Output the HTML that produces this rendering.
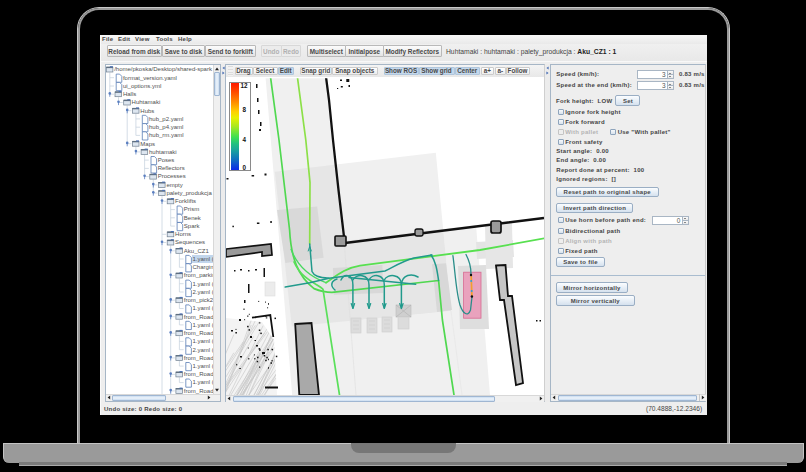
<!DOCTYPE html>
<html><head><meta charset="utf-8">
<style>
*{margin:0;padding:0;box-sizing:border-box}
html,body{width:806px;height:472px;overflow:hidden;background:#000}
body{position:relative;font-family:"Liberation Sans",sans-serif;color:#333}
.a{position:absolute}
#rim{left:77px;top:7px;width:653px;height:440px;border:1px solid #c8c8c8;border-bottom:none;border-radius:22px 22px 0 0;background:#000}
#rim2{left:78px;top:8px;width:651px;height:438px;border:2px solid #999;border-bottom:none;border-radius:21px 21px 0 0;background:#000}
#base{left:3px;top:443px;width:801px;height:19.7px;background:#9a9a9a;border:1px solid #c4c4c4;border-bottom:none;border-radius:0 0 6px 6px}
#lip{left:19px;top:462px;width:768px;height:4px;background:#7a7a7a;border-bottom:1px solid #aaa}
#notch{left:351px;top:443px;width:105px;height:10px;background:#777;border-radius:0 0 8px 8px}
#screen{left:100px;top:35px;width:607px;height:380px;background:#eeeeee}
.t{position:absolute;white-space:nowrap;font-size:6px;letter-spacing:0.25px;font-weight:bold;line-height:8px;color:#444}
.n{font-weight:normal;letter-spacing:0}
.btn{position:absolute;border:1px solid #b9b9b9;background:linear-gradient(#fcfcfc,#e4e4e4);border-radius:1px;white-space:nowrap;font-size:6.4px;font-weight:bold;text-align:center;color:#484848;overflow:hidden}
.sel{background:#c4d8ec;border-color:#b0c6dc}
.dis{color:#b0b0b0;border-color:#d8d8d8;background:#ececec}
.rb{background:linear-gradient(#fbfdff,#d5e1ee);border-color:#9aaec4;border-radius:2px;font-size:6px;letter-spacing:0.25px}
.mt{border-color:#cbcbcb;background:linear-gradient(#ffffff,#ededed)}

</style></head><body>
<div id="rim" class="a"></div>
<div id="rim2" class="a"></div>
<div id="base" class="a"></div>
<div id="lip" class="a"></div>
<div id="notch" class="a"></div>

<div id="screen" class="a"></div>
<div class="a" style="left:100px;top:35px;width:607px;height:9px;background:linear-gradient(#f8f8f8,#e9e9e9)"></div>
<div class="a" style="left:100px;top:44px;width:607px;height:17px;background:linear-gradient(#f0f0f0,#e8e8e8)"></div>
<div class="a" style="left:100px;top:61px;width:607px;height:1px;background:#f8f8f8"></div>
<div class="a" style="left:100px;top:35px;width:1px;height:380px;background:#fafafa"></div>
<div class="t" style="left:102px;top:34.9px">File</div>
<div class="t" style="left:118px;top:34.9px">Edit</div>
<div class="t" style="left:135px;top:34.9px">View</div>
<div class="t" style="left:156px;top:34.9px">Tools</div>
<div class="t" style="left:178px;top:34.9px">Help</div>
<div class="btn" style="left:106.5px;top:44.8px;width:55.5px;height:11.8px;line-height:11.2px">Reload from disk</div>
<div class="btn" style="left:162px;top:44.8px;width:43px;height:11.8px;line-height:11.2px">Save to disk</div>
<div class="btn" style="left:205px;top:44.8px;width:50.5px;height:11.8px;line-height:11.2px">Send to forklift</div>
<div class="btn dis" style="left:261px;top:44.8px;width:20.5px;height:11.8px;line-height:11.2px">Undo</div>
<div class="btn dis" style="left:281px;top:44.8px;width:20px;height:11.8px;line-height:11.2px">Redo</div>
<div class="btn" style="left:307px;top:44.8px;width:38.5px;height:11.8px;line-height:11.2px">Multiselect</div>
<div class="btn" style="left:345px;top:44.8px;width:38.5px;height:11.8px;line-height:11.2px">Initialpose</div>
<div class="btn" style="left:383px;top:44.8px;width:58.5px;height:11.8px;line-height:11.2px">Modify Reflectors</div>
<div class="t n" style="left:446px;top:47.8px;font-size:6.75px;color:#444">Huhtamaki : huhtamaki : palety_produkcja : <b style="color:#222">Aku_CZ1 : 1</b></div>
<!-- panels -->
<div class="a" style="left:105px;top:64px;width:116px;height:338px;border:1px solid #a6b6c6;background:#fff"></div>
<div class="a" style="left:225px;top:64px;width:320px;height:338px;border:1px solid #a6b6c6;border-right-color:#cfcfcf;background:#fff"></div>
<div class="a" style="left:550px;top:64px;width:156px;height:338px;border:1px solid #a6b6c6;border-right-color:#c8c8c8;background:#eeeeee"></div>
<div class="t" style="left:104px;top:405px">Undo size: 0 Redo size: 0</div>
<div class="t n" style="left:646px;top:405px;width:55px;text-align:right;font-size:6.6px">(70.4888,-12.2346)</div>

<div class="a" style="left:106px;top:65px;width:107px;height:329px;overflow:hidden"><svg class="a" style="left:-106px;top:-65px" width="806" height="472"><line x1="109.8" y1="72.5" x2="109.8" y2="94.2" stroke="#c9d4e0" stroke-width="0.8"/><line x1="109.8" y1="77.7" x2="114.0" y2="77.7" stroke="#c9d4e0" stroke-width="0.8"/><line x1="109.8" y1="86.0" x2="114.0" y2="86.0" stroke="#c9d4e0" stroke-width="0.8"/><line x1="118.5" y1="97.2" x2="118.5" y2="102.5" stroke="#c9d4e0" stroke-width="0.8"/><line x1="109.8" y1="94.2" x2="114.0" y2="94.2" stroke="#c9d4e0" stroke-width="0.8"/><line x1="127.2" y1="105.5" x2="127.2" y2="143.7" stroke="#c9d4e0" stroke-width="0.8"/><line x1="118.5" y1="102.5" x2="122.7" y2="102.5" stroke="#c9d4e0" stroke-width="0.8"/><line x1="135.9" y1="113.7" x2="135.9" y2="135.4" stroke="#c9d4e0" stroke-width="0.8"/><line x1="127.2" y1="110.7" x2="131.4" y2="110.7" stroke="#c9d4e0" stroke-width="0.8"/><line x1="135.9" y1="118.9" x2="140.1" y2="118.9" stroke="#c9d4e0" stroke-width="0.8"/><line x1="135.9" y1="127.2" x2="140.1" y2="127.2" stroke="#c9d4e0" stroke-width="0.8"/><line x1="135.9" y1="135.4" x2="140.1" y2="135.4" stroke="#c9d4e0" stroke-width="0.8"/><line x1="135.9" y1="146.7" x2="135.9" y2="151.9" stroke="#c9d4e0" stroke-width="0.8"/><line x1="127.2" y1="143.7" x2="131.4" y2="143.7" stroke="#c9d4e0" stroke-width="0.8"/><line x1="144.6" y1="154.9" x2="144.6" y2="176.6" stroke="#c9d4e0" stroke-width="0.8"/><line x1="135.9" y1="151.9" x2="140.1" y2="151.9" stroke="#c9d4e0" stroke-width="0.8"/><line x1="144.6" y1="160.1" x2="148.8" y2="160.1" stroke="#c9d4e0" stroke-width="0.8"/><line x1="144.6" y1="168.4" x2="148.8" y2="168.4" stroke="#c9d4e0" stroke-width="0.8"/><line x1="153.3" y1="179.6" x2="153.3" y2="193.1" stroke="#c9d4e0" stroke-width="0.8"/><line x1="144.6" y1="176.6" x2="148.8" y2="176.6" stroke="#c9d4e0" stroke-width="0.8"/><line x1="153.3" y1="184.9" x2="157.5" y2="184.9" stroke="#c9d4e0" stroke-width="0.8"/><line x1="162.0" y1="196.1" x2="162.0" y2="440.3" stroke="#c9d4e0" stroke-width="0.8"/><line x1="153.3" y1="193.1" x2="157.5" y2="193.1" stroke="#c9d4e0" stroke-width="0.8"/><line x1="170.7" y1="204.3" x2="170.7" y2="226.1" stroke="#c9d4e0" stroke-width="0.8"/><line x1="162.0" y1="201.3" x2="166.2" y2="201.3" stroke="#c9d4e0" stroke-width="0.8"/><line x1="170.7" y1="209.6" x2="174.9" y2="209.6" stroke="#c9d4e0" stroke-width="0.8"/><line x1="170.7" y1="217.8" x2="174.9" y2="217.8" stroke="#c9d4e0" stroke-width="0.8"/><line x1="170.7" y1="226.1" x2="174.9" y2="226.1" stroke="#c9d4e0" stroke-width="0.8"/><line x1="162.0" y1="234.3" x2="166.2" y2="234.3" stroke="#c9d4e0" stroke-width="0.8"/><line x1="170.7" y1="245.5" x2="170.7" y2="440.3" stroke="#c9d4e0" stroke-width="0.8"/><line x1="162.0" y1="242.5" x2="166.2" y2="242.5" stroke="#c9d4e0" stroke-width="0.8"/><line x1="179.4" y1="253.8" x2="179.4" y2="267.3" stroke="#c9d4e0" stroke-width="0.8"/><line x1="170.7" y1="250.8" x2="174.9" y2="250.8" stroke="#c9d4e0" stroke-width="0.8"/><line x1="179.4" y1="259.0" x2="183.6" y2="259.0" stroke="#c9d4e0" stroke-width="0.8"/><line x1="179.4" y1="267.3" x2="183.6" y2="267.3" stroke="#c9d4e0" stroke-width="0.8"/><line x1="179.4" y1="278.5" x2="179.4" y2="292.0" stroke="#c9d4e0" stroke-width="0.8"/><line x1="170.7" y1="275.5" x2="174.9" y2="275.5" stroke="#c9d4e0" stroke-width="0.8"/><line x1="179.4" y1="283.7" x2="183.6" y2="283.7" stroke="#c9d4e0" stroke-width="0.8"/><line x1="179.4" y1="292.0" x2="183.6" y2="292.0" stroke="#c9d4e0" stroke-width="0.8"/><line x1="179.4" y1="303.2" x2="179.4" y2="308.5" stroke="#c9d4e0" stroke-width="0.8"/><line x1="170.7" y1="300.2" x2="174.9" y2="300.2" stroke="#c9d4e0" stroke-width="0.8"/><line x1="179.4" y1="308.5" x2="183.6" y2="308.5" stroke="#c9d4e0" stroke-width="0.8"/><line x1="179.4" y1="319.7" x2="179.4" y2="324.9" stroke="#c9d4e0" stroke-width="0.8"/><line x1="170.7" y1="316.7" x2="174.9" y2="316.7" stroke="#c9d4e0" stroke-width="0.8"/><line x1="179.4" y1="324.9" x2="183.6" y2="324.9" stroke="#c9d4e0" stroke-width="0.8"/><line x1="179.4" y1="336.2" x2="179.4" y2="349.7" stroke="#c9d4e0" stroke-width="0.8"/><line x1="170.7" y1="333.2" x2="174.9" y2="333.2" stroke="#c9d4e0" stroke-width="0.8"/><line x1="179.4" y1="341.4" x2="183.6" y2="341.4" stroke="#c9d4e0" stroke-width="0.8"/><line x1="179.4" y1="349.7" x2="183.6" y2="349.7" stroke="#c9d4e0" stroke-width="0.8"/><line x1="179.4" y1="360.9" x2="179.4" y2="366.1" stroke="#c9d4e0" stroke-width="0.8"/><line x1="170.7" y1="357.9" x2="174.9" y2="357.9" stroke="#c9d4e0" stroke-width="0.8"/><line x1="179.4" y1="366.1" x2="183.6" y2="366.1" stroke="#c9d4e0" stroke-width="0.8"/><line x1="179.4" y1="377.4" x2="179.4" y2="382.6" stroke="#c9d4e0" stroke-width="0.8"/><line x1="170.7" y1="374.4" x2="174.9" y2="374.4" stroke="#c9d4e0" stroke-width="0.8"/><line x1="179.4" y1="382.6" x2="183.6" y2="382.6" stroke="#c9d4e0" stroke-width="0.8"/><line x1="170.7" y1="390.9" x2="174.9" y2="390.9" stroke="#c9d4e0" stroke-width="0.8"/><rect x="106.3" y="67.2" width="6.6" height="4.8" fill="#dde6f0" stroke="#6f7f90" stroke-width="0.7"/><rect x="106.3" y="66.7" width="6.6" height="1.4" fill="#5f6f80"/><rect x="109.9" y="66.2" width="3" height="1" fill="#4a70b8"/><path d="M116.2 74.1 h3.4 l2.2 2.2 v6 h-5.6 z" fill="#fff" stroke="#5a7db5" stroke-width="0.8"/><path d="M116.2 82.4 h3.4 l2.2 2.2 v6 h-5.6 z" fill="#fff" stroke="#5a7db5" stroke-width="0.8"/><rect x="115.0" y="91.9" width="6.6" height="4.8" fill="#dde6f0" stroke="#6f7f90" stroke-width="0.7"/><rect x="115.0" y="91.4" width="6.6" height="1.4" fill="#5f6f80"/><rect x="118.6" y="90.9" width="3" height="1" fill="#4a70b8"/><circle cx="109.8" cy="93.4" r="1.3" fill="#5b7fc0"/><line x1="109.8" y1="93.4" x2="109.8" y2="96.8" stroke="#5b7fc0" stroke-width="0.8"/><rect x="123.7" y="100.2" width="6.6" height="4.8" fill="#dde6f0" stroke="#6f7f90" stroke-width="0.7"/><rect x="123.7" y="99.7" width="6.6" height="1.4" fill="#5f6f80"/><rect x="127.3" y="99.2" width="3" height="1" fill="#4a70b8"/><circle cx="118.5" cy="101.7" r="1.3" fill="#5b7fc0"/><line x1="118.5" y1="101.7" x2="118.5" y2="105.1" stroke="#5b7fc0" stroke-width="0.8"/><rect x="132.4" y="108.4" width="6.6" height="4.8" fill="#dde6f0" stroke="#6f7f90" stroke-width="0.7"/><rect x="132.4" y="107.9" width="6.6" height="1.4" fill="#5f6f80"/><rect x="136.0" y="107.4" width="3" height="1" fill="#4a70b8"/><circle cx="127.2" cy="109.9" r="1.3" fill="#5b7fc0"/><line x1="127.2" y1="109.9" x2="127.2" y2="113.3" stroke="#5b7fc0" stroke-width="0.8"/><path d="M142.3 115.3 h3.4 l2.2 2.2 v6 h-5.6 z" fill="#fff" stroke="#5a7db5" stroke-width="0.8"/><path d="M142.3 123.6 h3.4 l2.2 2.2 v6 h-5.6 z" fill="#fff" stroke="#5a7db5" stroke-width="0.8"/><path d="M142.3 131.8 h3.4 l2.2 2.2 v6 h-5.6 z" fill="#fff" stroke="#5a7db5" stroke-width="0.8"/><rect x="132.4" y="141.4" width="6.6" height="4.8" fill="#dde6f0" stroke="#6f7f90" stroke-width="0.7"/><rect x="132.4" y="140.9" width="6.6" height="1.4" fill="#5f6f80"/><rect x="136.0" y="140.4" width="3" height="1" fill="#4a70b8"/><circle cx="127.2" cy="142.9" r="1.3" fill="#5b7fc0"/><line x1="127.2" y1="142.9" x2="127.2" y2="146.3" stroke="#5b7fc0" stroke-width="0.8"/><rect x="141.1" y="149.6" width="6.6" height="4.8" fill="#dde6f0" stroke="#6f7f90" stroke-width="0.7"/><rect x="141.1" y="149.1" width="6.6" height="1.4" fill="#5f6f80"/><rect x="144.7" y="148.6" width="3" height="1" fill="#4a70b8"/><circle cx="135.9" cy="151.1" r="1.3" fill="#5b7fc0"/><line x1="135.9" y1="151.1" x2="135.9" y2="154.5" stroke="#5b7fc0" stroke-width="0.8"/><path d="M151.0 156.5 h3.4 l2.2 2.2 v6 h-5.6 z" fill="#fff" stroke="#5a7db5" stroke-width="0.8"/><path d="M151.0 164.8 h3.4 l2.2 2.2 v6 h-5.6 z" fill="#fff" stroke="#5a7db5" stroke-width="0.8"/><rect x="149.8" y="174.3" width="6.6" height="4.8" fill="#dde6f0" stroke="#6f7f90" stroke-width="0.7"/><rect x="149.8" y="173.8" width="6.6" height="1.4" fill="#5f6f80"/><rect x="153.4" y="173.3" width="3" height="1" fill="#4a70b8"/><circle cx="144.6" cy="175.8" r="1.3" fill="#5b7fc0"/><line x1="144.6" y1="175.8" x2="144.6" y2="179.2" stroke="#5b7fc0" stroke-width="0.8"/><rect x="158.5" y="182.6" width="6.6" height="4.8" fill="#dde6f0" stroke="#6f7f90" stroke-width="0.7"/><rect x="158.5" y="182.1" width="6.6" height="1.4" fill="#5f6f80"/><rect x="162.1" y="181.6" width="3" height="1" fill="#4a70b8"/><circle cx="153.3" cy="184.1" r="1.3" fill="#5b7fc0"/><line x1="153.3" y1="184.1" x2="153.3" y2="187.5" stroke="#5b7fc0" stroke-width="0.8"/><rect x="158.5" y="190.8" width="6.6" height="4.8" fill="#dde6f0" stroke="#6f7f90" stroke-width="0.7"/><rect x="158.5" y="190.3" width="6.6" height="1.4" fill="#5f6f80"/><rect x="162.1" y="189.8" width="3" height="1" fill="#4a70b8"/><circle cx="153.3" cy="192.3" r="1.3" fill="#5b7fc0"/><line x1="153.3" y1="192.3" x2="153.3" y2="195.7" stroke="#5b7fc0" stroke-width="0.8"/><rect x="167.2" y="199.0" width="6.6" height="4.8" fill="#dde6f0" stroke="#6f7f90" stroke-width="0.7"/><rect x="167.2" y="198.5" width="6.6" height="1.4" fill="#5f6f80"/><rect x="170.8" y="198.0" width="3" height="1" fill="#4a70b8"/><circle cx="162.0" cy="200.5" r="1.3" fill="#5b7fc0"/><line x1="162.0" y1="200.5" x2="162.0" y2="203.9" stroke="#5b7fc0" stroke-width="0.8"/><path d="M177.1 206.0 h3.4 l2.2 2.2 v6 h-5.6 z" fill="#fff" stroke="#5a7db5" stroke-width="0.8"/><path d="M177.1 214.2 h3.4 l2.2 2.2 v6 h-5.6 z" fill="#fff" stroke="#5a7db5" stroke-width="0.8"/><path d="M177.1 222.5 h3.4 l2.2 2.2 v6 h-5.6 z" fill="#fff" stroke="#5a7db5" stroke-width="0.8"/><rect x="167.2" y="232.0" width="6.6" height="4.8" fill="#dde6f0" stroke="#6f7f90" stroke-width="0.7"/><rect x="167.2" y="231.5" width="6.6" height="1.4" fill="#5f6f80"/><rect x="170.8" y="231.0" width="3" height="1" fill="#4a70b8"/><rect x="167.2" y="240.2" width="6.6" height="4.8" fill="#dde6f0" stroke="#6f7f90" stroke-width="0.7"/><rect x="167.2" y="239.7" width="6.6" height="1.4" fill="#5f6f80"/><rect x="170.8" y="239.2" width="3" height="1" fill="#4a70b8"/><circle cx="162.0" cy="241.7" r="1.3" fill="#5b7fc0"/><line x1="162.0" y1="241.7" x2="162.0" y2="245.1" stroke="#5b7fc0" stroke-width="0.8"/><rect x="175.9" y="248.5" width="6.6" height="4.8" fill="#dde6f0" stroke="#6f7f90" stroke-width="0.7"/><rect x="175.9" y="248.0" width="6.6" height="1.4" fill="#5f6f80"/><rect x="179.5" y="247.5" width="3" height="1" fill="#4a70b8"/><circle cx="170.7" cy="250.0" r="1.3" fill="#5b7fc0"/><line x1="170.7" y1="250.0" x2="170.7" y2="253.4" stroke="#5b7fc0" stroke-width="0.8"/><path d="M185.8 255.4 h3.4 l2.2 2.2 v6 h-5.6 z" fill="#fff" stroke="#5a7db5" stroke-width="0.8"/><path d="M185.8 263.7 h3.4 l2.2 2.2 v6 h-5.6 z" fill="#fff" stroke="#5a7db5" stroke-width="0.8"/><rect x="175.9" y="273.2" width="6.6" height="4.8" fill="#dde6f0" stroke="#6f7f90" stroke-width="0.7"/><rect x="175.9" y="272.7" width="6.6" height="1.4" fill="#5f6f80"/><rect x="179.5" y="272.2" width="3" height="1" fill="#4a70b8"/><circle cx="170.7" cy="274.7" r="1.3" fill="#5b7fc0"/><line x1="170.7" y1="274.7" x2="170.7" y2="278.1" stroke="#5b7fc0" stroke-width="0.8"/><path d="M185.8 280.1 h3.4 l2.2 2.2 v6 h-5.6 z" fill="#fff" stroke="#5a7db5" stroke-width="0.8"/><path d="M185.8 288.4 h3.4 l2.2 2.2 v6 h-5.6 z" fill="#fff" stroke="#5a7db5" stroke-width="0.8"/><rect x="175.9" y="297.9" width="6.6" height="4.8" fill="#dde6f0" stroke="#6f7f90" stroke-width="0.7"/><rect x="175.9" y="297.4" width="6.6" height="1.4" fill="#5f6f80"/><rect x="179.5" y="296.9" width="3" height="1" fill="#4a70b8"/><circle cx="170.7" cy="299.4" r="1.3" fill="#5b7fc0"/><line x1="170.7" y1="299.4" x2="170.7" y2="302.8" stroke="#5b7fc0" stroke-width="0.8"/><path d="M185.8 304.9 h3.4 l2.2 2.2 v6 h-5.6 z" fill="#fff" stroke="#5a7db5" stroke-width="0.8"/><rect x="175.9" y="314.4" width="6.6" height="4.8" fill="#dde6f0" stroke="#6f7f90" stroke-width="0.7"/><rect x="175.9" y="313.9" width="6.6" height="1.4" fill="#5f6f80"/><rect x="179.5" y="313.4" width="3" height="1" fill="#4a70b8"/><circle cx="170.7" cy="315.9" r="1.3" fill="#5b7fc0"/><line x1="170.7" y1="315.9" x2="170.7" y2="319.3" stroke="#5b7fc0" stroke-width="0.8"/><path d="M185.8 321.3 h3.4 l2.2 2.2 v6 h-5.6 z" fill="#fff" stroke="#5a7db5" stroke-width="0.8"/><rect x="175.9" y="330.9" width="6.6" height="4.8" fill="#dde6f0" stroke="#6f7f90" stroke-width="0.7"/><rect x="175.9" y="330.4" width="6.6" height="1.4" fill="#5f6f80"/><rect x="179.5" y="329.9" width="3" height="1" fill="#4a70b8"/><circle cx="170.7" cy="332.4" r="1.3" fill="#5b7fc0"/><line x1="170.7" y1="332.4" x2="170.7" y2="335.8" stroke="#5b7fc0" stroke-width="0.8"/><path d="M185.8 337.8 h3.4 l2.2 2.2 v6 h-5.6 z" fill="#fff" stroke="#5a7db5" stroke-width="0.8"/><path d="M185.8 346.1 h3.4 l2.2 2.2 v6 h-5.6 z" fill="#fff" stroke="#5a7db5" stroke-width="0.8"/><rect x="175.9" y="355.6" width="6.6" height="4.8" fill="#dde6f0" stroke="#6f7f90" stroke-width="0.7"/><rect x="175.9" y="355.1" width="6.6" height="1.4" fill="#5f6f80"/><rect x="179.5" y="354.6" width="3" height="1" fill="#4a70b8"/><circle cx="170.7" cy="357.1" r="1.3" fill="#5b7fc0"/><line x1="170.7" y1="357.1" x2="170.7" y2="360.5" stroke="#5b7fc0" stroke-width="0.8"/><path d="M185.8 362.5 h3.4 l2.2 2.2 v6 h-5.6 z" fill="#fff" stroke="#5a7db5" stroke-width="0.8"/><rect x="175.9" y="372.1" width="6.6" height="4.8" fill="#dde6f0" stroke="#6f7f90" stroke-width="0.7"/><rect x="175.9" y="371.6" width="6.6" height="1.4" fill="#5f6f80"/><rect x="179.5" y="371.1" width="3" height="1" fill="#4a70b8"/><circle cx="170.7" cy="373.6" r="1.3" fill="#5b7fc0"/><line x1="170.7" y1="373.6" x2="170.7" y2="377.0" stroke="#5b7fc0" stroke-width="0.8"/><path d="M185.8 379.0 h3.4 l2.2 2.2 v6 h-5.6 z" fill="#fff" stroke="#5a7db5" stroke-width="0.8"/><rect x="175.9" y="388.6" width="6.6" height="4.8" fill="#dde6f0" stroke="#6f7f90" stroke-width="0.7"/><rect x="175.9" y="388.1" width="6.6" height="1.4" fill="#5f6f80"/><rect x="179.5" y="387.6" width="3" height="1" fill="#4a70b8"/><circle cx="170.7" cy="390.1" r="1.3" fill="#5b7fc0"/><line x1="170.7" y1="390.1" x2="170.7" y2="393.5" stroke="#5b7fc0" stroke-width="0.8"/></svg><div class="a" style="left:-106px;top:-65px;width:806px;height:472px"><div class="t n" style="left:114.2px;top:65.3px;font-size:6px;color:#505050">/home/pkoska/Desktop/shared-spark</div><div class="t n" style="left:122.9px;top:73.5px;font-size:6px;color:#505050">format_version.yaml</div><div class="t n" style="left:122.9px;top:81.8px;font-size:6px;color:#505050">ui_options.yml</div><div class="t n" style="left:122.9px;top:90.0px;font-size:6px;color:#505050">Halls</div><div class="t n" style="left:131.6px;top:98.3px;font-size:6px;color:#505050">Huhtamaki</div><div class="t n" style="left:140.3px;top:106.5px;font-size:6px;color:#505050">Hubs</div><div class="t n" style="left:149.0px;top:114.7px;font-size:6px;color:#505050">hub_p2.yaml</div><div class="t n" style="left:149.0px;top:123.0px;font-size:6px;color:#505050">hub_p4.yaml</div><div class="t n" style="left:149.0px;top:131.2px;font-size:6px;color:#505050">hub_rm.yaml</div><div class="t n" style="left:140.3px;top:139.5px;font-size:6px;color:#505050">Maps</div><div class="t n" style="left:149.0px;top:147.7px;font-size:6px;color:#505050">huhtamaki</div><div class="t n" style="left:157.7px;top:155.9px;font-size:6px;color:#505050">Poses</div><div class="t n" style="left:157.7px;top:164.2px;font-size:6px;color:#505050">Reflectors</div><div class="t n" style="left:157.7px;top:172.4px;font-size:6px;color:#505050">Processes</div><div class="t n" style="left:166.4px;top:180.7px;font-size:6px;color:#505050">empty</div><div class="t n" style="left:166.4px;top:188.9px;font-size:6px;color:#505050">palety_produkcja</div><div class="t n" style="left:175.1px;top:197.1px;font-size:6px;color:#505050">Forklifts</div><div class="t n" style="left:183.8px;top:205.4px;font-size:6px;color:#505050">Prism</div><div class="t n" style="left:183.8px;top:213.6px;font-size:6px;color:#505050">Benek</div><div class="t n" style="left:183.8px;top:221.9px;font-size:6px;color:#505050">Spark</div><div class="t n" style="left:175.1px;top:230.1px;font-size:6px;color:#505050">Horns</div><div class="t n" style="left:175.1px;top:238.3px;font-size:6px;color:#505050">Sequences</div><div class="t n" style="left:183.8px;top:246.6px;font-size:6px;color:#505050">Aku_CZ1</div><div class="a" style="left:191.5px;top:255.0px;width:22px;height:8px;background:#c2d6ec"></div><div class="t n" style="left:192.5px;top:254.8px;font-size:6px;color:#505050">1.yaml (</div><div class="t n" style="left:192.5px;top:263.1px;font-size:6px;color:#505050">Charging</div><div class="t n" style="left:183.8px;top:271.3px;font-size:6px;color:#505050">from_parking</div><div class="t n" style="left:192.5px;top:279.5px;font-size:6px;color:#505050">1.yaml (</div><div class="t n" style="left:192.5px;top:287.8px;font-size:6px;color:#505050">2.yaml (</div><div class="t n" style="left:183.8px;top:296.0px;font-size:6px;color:#505050">from_pick2</div><div class="t n" style="left:192.5px;top:304.3px;font-size:6px;color:#505050">1.yaml (</div><div class="t n" style="left:183.8px;top:312.5px;font-size:6px;color:#505050">from_Road</div><div class="t n" style="left:192.5px;top:320.7px;font-size:6px;color:#505050">1.yaml (</div><div class="t n" style="left:183.8px;top:329.0px;font-size:6px;color:#505050">from_Road</div><div class="t n" style="left:192.5px;top:337.2px;font-size:6px;color:#505050">1.yaml (</div><div class="t n" style="left:192.5px;top:345.5px;font-size:6px;color:#505050">2.yaml (</div><div class="t n" style="left:183.8px;top:353.7px;font-size:6px;color:#505050">from_Road</div><div class="t n" style="left:192.5px;top:361.9px;font-size:6px;color:#505050">1.yaml (</div><div class="t n" style="left:183.8px;top:370.2px;font-size:6px;color:#505050">from_Road</div><div class="t n" style="left:192.5px;top:378.4px;font-size:6px;color:#505050">1.yaml (</div><div class="t n" style="left:183.8px;top:386.7px;font-size:6px;color:#505050">from_Road</div></div></div>
<div class="a" style="left:213px;top:65px;width:7px;height:329px;background:#f0f0f0;border-left:1px solid #d8d8d8"></div>
<div class="a" style="left:213.5px;top:72px;width:6.5px;height:24px;background:linear-gradient(90deg,#c9dcf0,#eef4fb 50%,#c9dcf0);border:1px solid #9fb6d2;border-radius:1px"></div>
<div class="a" style="left:214px;top:66px;width:6px;height:6px;font-size:5px;line-height:6px;text-align:center;color:#222"><svg width="6" height="6" viewBox="0 0 6 6" style="display:block"><path d="M1,4.2 L3,1.6 L5,4.2Z" fill="#222"/></svg></div>
<div class="a" style="left:214px;top:387px;width:6px;height:6px;font-size:5px;line-height:6px;text-align:center;color:#222"><svg width="6" height="6" viewBox="0 0 6 6" style="display:block"><path d="M1,1.8 L3,4.4 L5,1.8Z" fill="#222"/></svg></div>
<div class="a" style="left:106px;top:394px;width:114px;height:7px;background:#f0f0f0;border-top:1px solid #d8d8d8"></div>
<div class="a" style="left:112px;top:394.5px;width:54px;height:6.5px;background:linear-gradient(#c9dcf0,#eef4fb 50%,#c9dcf0);border:1px solid #9fb6d2;border-radius:1px"></div>
<div class="a" style="left:106px;top:394px;width:6px;height:7px;font-size:5px;line-height:7px;text-align:center;color:#222"><svg width="6" height="7" viewBox="0 0 6 7" style="display:block"><path d="M4.2,1.5 L1.6,3.5 L4.2,5.5Z" fill="#222"/></svg></div>
<div class="a" style="left:206px;top:394px;width:6px;height:7px;font-size:5px;line-height:7px;text-align:center;color:#222"><svg width="6" height="7" viewBox="0 0 6 7" style="display:block"><path d="M1.8,1.5 L4.4,3.5 L1.8,5.5Z" fill="#222"/></svg></div>

<svg class="a" style="left:0;top:0" width="806" height="472" viewBox="0 0 806 472">
<defs><clipPath id="mc"><rect x="226" y="78.3" width="318" height="316.7"/></clipPath></defs>
<g clip-path="url(#mc)">
<rect x="226" y="77" width="320" height="318" fill="#fff"/>
<polygon points="265.5,77 327.3,77 345,241 344,246 356,395 292.2,395" fill="#f0f0f0"/>
<polygon points="274.8,171.8 435.8,152.7 451,311 291.8,326.4" fill="#f0f0f0"/>
<polygon points="443,229 476,225 490,395 292,395 291.8,326.4 451,311" fill="#f0f0f0"/>
<polygon points="274.8,171.8 336.7,164.5 345,241 443.1,228.7 451,311 291.8,326.4" fill="#e6e6e6"/>
<line x1="344.5" y1="246" x2="356" y2="395" stroke="#dedede" stroke-width="0.6"/>
<line x1="451" y1="311" x2="462" y2="395" stroke="#e4e4e4" stroke-width="0.6"/>
<polygon points="277,210 317.2,206.5 323.6,257.8 285.4,262.9" fill="#d9d9d9"/>
<polygon points="332.9,268 382.4,265 383.3,292.9 333.8,294.8" fill="#d8d8d8"/>
<polygon points="432,264.3 446,263.3 452,310 437,312" fill="#d8d8d8"/>
<polygon points="458,266 486,265 489,329 460,329" fill="#dedede"/>
<polygon points="476,242 513,240 514,257 477,259" fill="#e4e4e4"/>
<polygon points="485,225 512,223 513,268 486,269" fill="#e6e6e6"/>
<rect x="351" y="318" width="10" height="15" fill="#dcdcdc" stroke="#cdcdcd" stroke-width="0.6"/>
<line x1="353" y1="321" x2="359" y2="321" stroke="#c8c8c8" stroke-width="0.5"/>
<line x1="353" y1="325" x2="359" y2="325" stroke="#c8c8c8" stroke-width="0.5"/>
<line x1="353" y1="329" x2="359" y2="329" stroke="#c8c8c8" stroke-width="0.5"/>
<rect x="367" y="318" width="10" height="15" fill="#dcdcdc" stroke="#cdcdcd" stroke-width="0.6"/>
<line x1="369" y1="321" x2="375" y2="321" stroke="#c8c8c8" stroke-width="0.5"/>
<line x1="369" y1="325" x2="375" y2="325" stroke="#c8c8c8" stroke-width="0.5"/>
<line x1="369" y1="329" x2="375" y2="329" stroke="#c8c8c8" stroke-width="0.5"/>
<rect x="382" y="317" width="10" height="15" fill="#dcdcdc" stroke="#cdcdcd" stroke-width="0.6"/>
<line x1="384" y1="320" x2="390" y2="320" stroke="#c8c8c8" stroke-width="0.5"/>
<line x1="384" y1="324" x2="390" y2="324" stroke="#c8c8c8" stroke-width="0.5"/>
<line x1="384" y1="328" x2="390" y2="328" stroke="#c8c8c8" stroke-width="0.5"/>
<rect x="396" y="305" width="15" height="12" fill="#cfcfcf" stroke="#bdbdbd" stroke-width="0.6"/><path d="M396,305 L411,317 M411,305 L396,317" stroke="#b0b0b0" stroke-width="0.6"/>
<rect x="398" y="317" width="11" height="12" fill="#dcdcdc" stroke="#cdcdcd" stroke-width="0.6"/>
<rect x="265" y="282" width="10" height="14" fill="#ececec" stroke="#dcdcdc" stroke-width="0.6"/>
<polygon points="226,318 262,322 274,340 277,395 226,395" fill="#f3f3f3"/>
<defs><clipPath id="hc"><polygon points="226,318 262,322 274,340 277,395 226,395"/></clipPath></defs>
<g clip-path="url(#hc)" stroke="#c4c4c4" stroke-width="0.6"><line x1="220.3" y1="395" x2="253.5" y2="336.5"/><line x1="242.2" y1="395" x2="268.2" y2="351.7"/><line x1="206.8" y1="395" x2="243.1" y2="342.0"/><line x1="220.1" y1="395" x2="267.6" y2="331.5"/><line x1="256.2" y1="395" x2="295.1" y2="323.0"/><line x1="215.0" y1="395" x2="265.4" y2="311.6"/><line x1="237.4" y1="395" x2="285.0" y2="321.4"/><line x1="209.8" y1="395" x2="255.3" y2="325.4"/><line x1="224.1" y1="395" x2="254.3" y2="311.7"/><line x1="234.4" y1="395" x2="287.9" y2="311.1"/><line x1="248.8" y1="395" x2="291.8" y2="335.3"/><line x1="254.1" y1="395" x2="299.9" y2="308.2"/><line x1="258.7" y1="395" x2="276.9" y2="348.2"/><line x1="219.0" y1="395" x2="264.5" y2="333.2"/><line x1="243.6" y1="395" x2="274.3" y2="329.6"/><line x1="229.2" y1="395" x2="263.1" y2="325.7"/><line x1="241.1" y1="395" x2="293.8" y2="320.9"/><line x1="261.7" y1="395" x2="323.8" y2="305.5"/><line x1="246.3" y1="395" x2="280.8" y2="312.0"/><line x1="263.9" y1="395" x2="312.6" y2="326.5"/><line x1="248.8" y1="395" x2="284.3" y2="313.4"/><line x1="240.4" y1="395" x2="260.4" y2="351.8"/><line x1="257.2" y1="395" x2="290.4" y2="350.6"/><line x1="254.0" y1="395" x2="278.5" y2="347.5"/><line x1="223.6" y1="395" x2="278.6" y2="311.4"/><line x1="208.7" y1="395" x2="233.8" y2="352.8"/><line x1="249.1" y1="395" x2="289.6" y2="311.0"/><line x1="264.8" y1="395" x2="314.5" y2="305.1"/><line x1="224.6" y1="395" x2="251.2" y2="325.0"/><line x1="207.9" y1="395" x2="233.8" y2="334.6"/><line x1="242.6" y1="395" x2="260.0" y2="352.9"/><line x1="258.1" y1="395" x2="299.9" y2="307.1"/><line x1="259.8" y1="395" x2="291.4" y2="332.0"/><line x1="237.2" y1="395" x2="279.6" y2="325.2"/><line x1="239.6" y1="395" x2="291.6" y2="308.0"/><line x1="236.4" y1="395" x2="276.1" y2="319.0"/><line x1="220.3" y1="395" x2="262.1" y2="306.1"/><line x1="237.3" y1="395" x2="260.4" y2="354.4"/><line x1="230.9" y1="395" x2="254.8" y2="354.0"/><line x1="242.9" y1="395" x2="268.9" y2="352.0"/></g>
<polygon points="295.2,324 311.5,323 319,395 299.3,395" fill="#a9a9a9" stroke="#111" stroke-width="1.8"/>
<polygon points="496,265.5 505.5,265 508,296 512,296 523,383 516,385 504,300 500,300" fill="#c6c6c6" stroke="#111" stroke-width="1.8"/>
<polyline points="326,77 329,100 333,140 338.5,190 344.5,241" fill="none" stroke="#111" stroke-width="2.3"/>
<polyline points="345,243 440,231 544,218" fill="none" stroke="#111" stroke-width="2.3"/>
<rect x="335" y="236" width="11" height="10" rx="1" fill="#9a9a9a" stroke="#111" stroke-width="1.6"/>
<rect x="415" y="229" width="8" height="7" rx="2" fill="#9a9a9a" stroke="#111" stroke-width="1.3"/>
<rect x="491" y="221" width="10" height="12" rx="2" fill="#9a9a9a" stroke="#111" stroke-width="1.7"/>
<polygon points="226,249 271,244 272,255 262,256 262,252 226,257" fill="#9a9a9a" stroke="#111" stroke-width="1.7"/>
<polyline points="252,317.7 270.3,315 273.3,337" fill="none" stroke="#111" stroke-width="1.8"/>
<g fill="#111"><rect x="340.0" y="79.5" width="2" height="1.5"/><rect x="346.3" y="79.0" width="3" height="3"/><rect x="340.8" y="86.0" width="2" height="1.5"/><rect x="348.5" y="85.0" width="1.5" height="2"/><rect x="337.0" y="88.0" width="1.2" height="1"/><rect x="256.0" y="84.0" width="1.5" height="4"/><rect x="257.0" y="98.0" width="1.5" height="4"/><rect x="258.0" y="110.0" width="1.5" height="4"/><rect x="260.0" y="122.0" width="1.5" height="4"/><rect x="259.0" y="129.0" width="2" height="2"/><rect x="226.5" y="178.0" width="2" height="1.5"/><rect x="251.6" y="175.0" width="2.5" height="1.5"/><rect x="264.5" y="173.5" width="2" height="2"/><rect x="232.4" y="225.7" width="1.5" height="1.5"/><rect x="256.9" y="222.5" width="2.5" height="1.5"/><rect x="270.3" y="221.0" width="1.5" height="2"/><rect x="263.5" y="268.0" width="1.5" height="9"/><rect x="234.0" y="270.0" width="1.5" height="1.5"/><rect x="240.0" y="269.0" width="2" height="1.5"/><rect x="248.0" y="270.0" width="1.5" height="1.5"/><rect x="255.0" y="269.0" width="2" height="1.5"/><rect x="248.0" y="284.0" width="1.5" height="9"/><rect x="239.0" y="319.0" width="2" height="2"/><rect x="244.0" y="300.0" width="1.5" height="3"/><rect x="231.0" y="330.0" width="2" height="1.5"/><rect x="250.0" y="336.0" width="2" height="2"/><rect x="256.0" y="345.0" width="2" height="1.5"/><rect x="262.0" y="352.0" width="3" height="2"/><rect x="240.0" y="356.0" width="2" height="1.5"/><rect x="265.0" y="386.5" width="13" height="2"/><rect x="536.0" y="320.0" width="1.5" height="1.5"/><rect x="539.5" y="320.0" width="1.5" height="1.5"/><rect x="229.0" y="246.0" width="0.1" height="0.1"/><rect x="260.3" y="332.6" width="1.5" height="1.5"/><rect x="265.0" y="301.6" width="1" height="1"/><rect x="274.5" y="317.6" width="1.5" height="1.5"/><rect x="258.9" y="322.4" width="1.5" height="1"/><rect x="247.1" y="325.8" width="1.5" height="1.5"/><rect x="267.1" y="307.3" width="1" height="1"/><rect x="247.0" y="315.6" width="1.5" height="1"/><rect x="247.8" y="347.5" width="1" height="1"/><rect x="259.2" y="366.4" width="1" height="1.5"/><rect x="268.0" y="367.2" width="1" height="1.5"/><rect x="265.2" y="315.3" width="1.5" height="1.5"/><rect x="243.5" y="308.5" width="1" height="1.5"/><rect x="267.9" y="358.7" width="1" height="1.5"/><rect x="248.3" y="358.0" width="1" height="1.5"/><rect x="258.8" y="329.5" width="1.5" height="1.5"/><rect x="248.5" y="329.2" width="1.5" height="1.5"/><rect x="235.5" y="328.9" width="1" height="1"/><rect x="254.0" y="358.3" width="1.5" height="1"/><rect x="235.4" y="332.0" width="1.5" height="1.5"/><rect x="271.4" y="360.3" width="1.5" height="1"/><rect x="268.0" y="303.2" width="1" height="1.5"/><rect x="258.2" y="300.9" width="1" height="1"/><rect x="255.1" y="316.7" width="1" height="1.5"/><rect x="236.2" y="363.9" width="1" height="1.5"/><rect x="239.3" y="368.0" width="1.5" height="1"/><rect x="248.8" y="313.8" width="1" height="1"/><rect x="244.1" y="319.2" width="1" height="1"/><rect x="254.5" y="340.0" width="1.5" height="1"/><rect x="265.8" y="317.4" width="1.5" height="1"/><rect x="253.9" y="354.4" width="1" height="1"/><rect x="271.5" y="348.8" width="1.5" height="1.5"/><rect x="257.0" y="356.7" width="1.5" height="1.5"/><rect x="256.7" y="360.8" width="1.5" height="1.5"/><rect x="266.3" y="356.8" width="1.5" height="1.5"/><rect x="259.1" y="349.3" width="1.5" height="1.5"/><rect x="263.7" y="355.0" width="1.5" height="1.5"/><rect x="262.1" y="352.8" width="1.5" height="1.5"/><rect x="275.8" y="355.7" width="1.5" height="1.5"/><rect x="258.6" y="348.1" width="1.5" height="1.5"/><rect x="270.5" y="362.3" width="1.5" height="1.5"/><rect x="267.3" y="348.8" width="1.5" height="1.5"/><rect x="265.2" y="359.7" width="1.5" height="1.5"/></g>
<g fill="none" stroke-linecap="round" stroke-linejoin="round">
<path d="M270.5,77 L279,140 L289.6,230 C291,258 298,276 314,288.6 C320,291 326,292.3 332,292.3 L438.6,280.5 L442.4,320 L454,395" stroke="#50d850" stroke-width="1.7"/>
<path d="M297.4,77 L305.8,140 L310,182.4 L309.7,244" stroke="#8ce048" stroke-width="1.7"/>
<path d="M291,249.3 C297,265 308,276 326,282.7" stroke="#48d860" stroke-width="1.3"/>
<path d="M294,262 C302,280 318,284 323,289.3 L339.5,395" stroke="#5ae05a" stroke-width="1.7"/>
<path d="M326,282.7 C336,276 345,268 360,265.6 L480,250 L546,238" stroke="#58e050" stroke-width="1.8"/>
</g>
<g fill="none" stroke="#219a8c" stroke-width="1.5" stroke-linecap="round" stroke-linejoin="round">
<path d="M309.7,244 L312,271.5 C314,276 318.6,277.5 329,278.2 L385,271 C392,268 400,262 414,258 L432,255"/>
<path d="M285.2,287.1 L309.7,282.7 L329,278.2"/>
<path d="M337,279 C331,281 330,286 335,290"/>
<path d="M349,277.6 L415.7,284.3"/>
<path d="M431,254.8 C436,262 437,270 438.6,280.5"/>
<path d="M341,280 C344,273.5 352.9,273.5 352.9,285 L352.9,308"/>
<path d="M351.2,303.5 L352.9,308.5 L354.59999999999997,303.5" stroke-width="1.2"/>
<path d="M352.9,280 C355.9,273.5 369,273.5 369,285 L369,308"/>
<path d="M367.3,303.5 L369,308.5 L370.7,303.5" stroke-width="1.2"/>
<path d="M369,280 C372,273.5 384.3,273.5 384.3,285 L384.3,308"/>
<path d="M382.6,303.5 L384.3,308.5 L386.0,303.5" stroke-width="1.2"/>
<path d="M384.3,280 C387.3,273.5 401.4,273.5 401.4,285 L401.4,308"/>
<path d="M399.7,303.5 L401.4,308.5 L403.09999999999997,303.5" stroke-width="1.2"/>
<path d="M401.4,285 C402,274 412,273.5 418,277"/>
<path d="M308.2,251 L309.7,246.5 L311.4,251" stroke-width="1"/>
</g>
<rect x="463.6" y="272.2" width="17.4" height="46" fill="#e9a2bd" stroke="#d86a92" stroke-width="0.8"/>
<g fill="none" stroke="#2a8e8a" stroke-width="1.3" stroke-linecap="round">
<path d="M452.9,255.7 C455,270 456,292 460,305 C463,314 468,317 470.5,310 L472,296.7"/>
<path d="M466,254.5 C470,262 471,268 471,274"/>
</g>
<path d="M471.2,276 L471.9,296" stroke="#f0a030" stroke-width="1.7"/>
<g fill="#111"><circle cx="471" cy="275" r="1.2"/><circle cx="471.9" cy="296.5" r="1.2"/></g>
<g fill="#2aa0e0"><circle cx="471.2" cy="281" r="1"/><circle cx="471.7" cy="291" r="1"/></g>
</g></svg><div class="a" style="left:226px;top:65px;width:318px;height:12px;background:linear-gradient(#f4f4f4,#e8e8e8)"></div>
<div class="a" style="left:221px;top:64px;width:4px;height:338px;background:#ececec"></div>
<div class="a" style="left:221.5px;top:66px;width:3px;height:4px;font-size:4px;line-height:4px;color:#4a6fb5"><svg width="3" height="4" viewBox="0 0 3 4" style="display:block"><path d="M2.6,0.4 L0.4,2 L2.6,3.6Z" fill="#4a6fb5"/></svg></div>
<div class="a" style="left:221.5px;top:71px;width:3px;height:4px;font-size:4px;line-height:4px;color:#4a6fb5"><svg width="3" height="4" viewBox="0 0 3 4" style="display:block"><path d="M0.4,0.4 L2.6,2 L0.4,3.6Z" fill="#4a6fb5"/></svg></div>
<div class="a" style="left:545px;top:64px;width:5px;height:338px;background:#ececec"></div>
<div class="a" style="left:546px;top:66px;width:3px;height:4px;font-size:4px;line-height:4px;color:#4a6fb5"><svg width="3" height="4" viewBox="0 0 3 4" style="display:block"><path d="M2.6,0.4 L0.4,2 L2.6,3.6Z" fill="#4a6fb5"/></svg></div>
<div class="a" style="left:546px;top:71px;width:3px;height:4px;font-size:4px;line-height:4px;color:#4a6fb5"><svg width="3" height="4" viewBox="0 0 3 4" style="display:block"><path d="M0.4,0.4 L2.6,2 L0.4,3.6Z" fill="#4a6fb5"/></svg></div>
<div class="a" style="left:227.5px;top:66px;width:5px;height:10px;background:repeating-linear-gradient(#dcdcdc 0 0.7px,#f2f2f2 0.7px 1.6px)"></div>
<div class="btn mt" style="left:234.5px;top:66.5px;width:18px;height:8.5px;line-height:6.3px;font-size:6.3px;overflow:visible">Drag</div>
<div class="btn mt" style="left:252.5px;top:66.5px;width:25px;height:8.5px;line-height:6.3px;font-size:6.3px;overflow:visible">Select</div>
<div class="btn sel" style="left:277.5px;top:66.5px;width:16.5px;height:8.5px;line-height:6.3px;font-size:6.3px;overflow:visible">Edit</div>
<div class="btn mt" style="left:299.5px;top:66.5px;width:32.5px;height:8.5px;line-height:6.3px;font-size:6.3px;overflow:visible">Snap grid</div>
<div class="btn mt" style="left:332px;top:66.5px;width:45.5px;height:8.5px;line-height:6.3px;font-size:6.3px;overflow:visible">Snap objects</div>
<div class="btn sel" style="left:383.5px;top:66.5px;width:35px;height:8.5px;line-height:6.3px;font-size:6.3px;overflow:visible">Show ROS</div>
<div class="btn sel" style="left:418.5px;top:66.5px;width:36px;height:8.5px;line-height:6.3px;font-size:6.3px;overflow:visible">Show grid</div>
<div class="btn sel" style="left:454.5px;top:66.5px;width:25.5px;height:8.5px;line-height:6.3px;font-size:6.3px;overflow:visible">Center</div>
<div class="btn mt" style="left:481px;top:66.5px;width:12.5px;height:8.5px;line-height:6.3px;font-size:6.3px;overflow:visible">a+</div>
<div class="btn mt" style="left:495px;top:66.5px;width:10.5px;height:8.5px;line-height:6.3px;font-size:6.3px;overflow:visible">a-</div>
<div class="btn mt" style="left:505.5px;top:66.5px;width:24px;height:8.5px;line-height:6.3px;font-size:6.3px;overflow:visible">Follow</div>
<div class="a" style="left:226px;top:395px;width:318px;height:6.5px;background:#f0f0f0;border-top:1px solid #d8d8d8"></div>
<div class="a" style="left:232.5px;top:395.5px;width:262px;height:6px;background:linear-gradient(#c9dcf0,#eef4fb 50%,#c9dcf0);border:1px solid #9fb6d2;border-radius:1px"></div>
<div class="a" style="left:226px;top:395px;width:6px;height:7px;font-size:5px;line-height:7px;text-align:center;color:#222"><svg width="6" height="7" viewBox="0 0 6 7" style="display:block"><path d="M4.2,1.5 L1.6,3.5 L4.2,5.5Z" fill="#222"/></svg></div>
<div class="a" style="left:537.5px;top:395px;width:6px;height:7px;font-size:5px;line-height:7px;text-align:center;color:#222"><svg width="6" height="7" viewBox="0 0 6 7" style="display:block"><path d="M1.8,1.5 L4.4,3.5 L1.8,5.5Z" fill="#222"/></svg></div>
<div class="a" style="left:228.7px;top:81.7px;width:22.3px;height:89.6px;background:#fff;border:1px solid #8a8a8a"></div>
<div class="a" style="left:230.8px;top:83.4px;width:8.5px;height:86.2px;background:linear-gradient(#ff1a00,#ff4a00 10%,#ff8c00 22%,#ffd000 33%,#e8f000 40%,#a8e820 50%,#40e050 62%,#20c080 70%,#1aa0a0 78%,#1070c0 88%,#0a28e8)"></div>
<div class="t n" style="left:240.5px;top:81.5px;font-size:6.3px;font-weight:bold;color:#111">12</div>
<div class="t n" style="left:242.5px;top:106px;font-size:6.3px;font-weight:bold;color:#111">8</div>
<div class="t n" style="left:242.5px;top:135.5px;font-size:6.3px;font-weight:bold;color:#111">4</div>
<div class="t n" style="left:242.5px;top:164px;font-size:6.3px;font-weight:bold;color:#111">0</div>

<div class="t" style="left:556.3px;top:70.2px;">Speed (km/h):</div>
<div class="a" style="left:637px;top:70.4px;width:37.0px;height:8.2px;background:#fff;border:1px solid #a9b6c4"></div>
<div class="t n" style="left:637px;top:70.7px;width:28.5px;text-align:right;font-size:6.5px;color:#555">3</div>
<div class="a" style="left:666.5px;top:70.4px;width:7.5px;height:4.6px;background:linear-gradient(#fafafa,#e8e8e8);border:1px solid #a9b6c4"></div>
<div class="a" style="left:666.5px;top:74.0px;width:7.5px;height:4.6px;background:linear-gradient(#fafafa,#e8e8e8);border:1px solid #a9b6c4"></div>
<div class="a" style="left:669.4px;top:72.6px;width:2px;height:1px;background:#888"></div>
<div class="a" style="left:669.4px;top:75.6px;width:2px;height:1px;background:#888"></div>
<div class="t" style="left:679px;top:70.2px;">0.83 m/s</div>
<div class="t" style="left:556.3px;top:81.2px;">Speed at the end (km/h):</div>
<div class="a" style="left:637px;top:81.4px;width:37.0px;height:8.2px;background:#fff;border:1px solid #a9b6c4"></div>
<div class="t n" style="left:637px;top:81.7px;width:28.5px;text-align:right;font-size:6.5px;color:#555">3</div>
<div class="a" style="left:666.5px;top:81.4px;width:7.5px;height:4.6px;background:linear-gradient(#fafafa,#e8e8e8);border:1px solid #a9b6c4"></div>
<div class="a" style="left:666.5px;top:85.0px;width:7.5px;height:4.6px;background:linear-gradient(#fafafa,#e8e8e8);border:1px solid #a9b6c4"></div>
<div class="a" style="left:669.4px;top:83.6px;width:2px;height:1px;background:#888"></div>
<div class="a" style="left:669.4px;top:86.6px;width:2px;height:1px;background:#888"></div>
<div class="t" style="left:679px;top:81.4px;">0.83 m/s</div>
<div class="t" style="left:556.1px;top:96.8px;">Fork height:&nbsp; LOW</div>
<div class="btn rb" style="left:615.4px;top:95.3px;width:25.1px;height:10.6px;line-height:10.0px">Set</div>
<div class="a" style="left:557.9px;top:109.3px;width:6px;height:6px;border:1px solid #8ea4bc;background:linear-gradient(#f6f9fc,#d8e2ec);border-radius:1px"></div>
<div class="t" style="left:565.1999999999999px;top:108.2px;">Ignore fork height</div>
<div class="a" style="left:557.9px;top:118.9px;width:6px;height:6px;border:1px solid #8ea4bc;background:linear-gradient(#f6f9fc,#d8e2ec);border-radius:1px"></div>
<div class="t" style="left:565.1999999999999px;top:117.8px;">Fork forward</div>
<div class="a" style="left:557.9px;top:129.0px;width:6px;height:6px;border:1px solid #c4c4c4;background:#eeeeee;border-radius:1px"></div>
<div class="t" style="left:565.1999999999999px;top:127.9px;color:#b4b4b4">With pallet</div>
<div class="a" style="left:610.4px;top:129.0px;width:6px;height:6px;border:1px solid #8ea4bc;background:linear-gradient(#f6f9fc,#d8e2ec);border-radius:1px"></div>
<div class="t" style="left:617.6999999999999px;top:127.9px;">Use "With pallet"</div>
<div class="a" style="left:557.9px;top:138.9px;width:6px;height:6px;border:1px solid #8ea4bc;background:linear-gradient(#f6f9fc,#d8e2ec);border-radius:1px"></div>
<div class="t" style="left:565.1999999999999px;top:137.8px;">Front safety</div>
<div class="t" style="left:556.3px;top:147.0px;">Start angle:&nbsp; 0.00</div>
<div class="t" style="left:556.3px;top:156.0px;">End angle:&nbsp; 0.00</div>
<div class="t" style="left:556.3px;top:165.5px;">Report done at percent:&nbsp; 100</div>
<div class="t" style="left:556.3px;top:174.6px;">Ignored regions:&nbsp; []</div>
<div class="btn rb" style="left:556px;top:187px;width:102.6px;height:10.2px;line-height:9.6px">Reset path to original shape</div>
<div class="btn rb" style="left:556px;top:203.3px;width:77.4px;height:10.1px;line-height:9.5px">Invert path direction</div>
<div class="a" style="left:557.9px;top:217.3px;width:6px;height:6px;border:1px solid #8ea4bc;background:linear-gradient(#f6f9fc,#d8e2ec);border-radius:1px"></div>
<div class="t" style="left:565.1999999999999px;top:216.2px;">Use horn before path end:</div>
<div class="a" style="left:651.8px;top:216px;width:37.2px;height:8.8px;background:#fff;border:1px solid #a9b6c4"></div>
<div class="t n" style="left:651.8px;top:216.6px;width:28.7px;text-align:right;font-size:6.5px;color:#555">0</div>
<div class="a" style="left:681.5px;top:216px;width:7.5px;height:4.9px;background:linear-gradient(#fafafa,#e8e8e8);border:1px solid #a9b6c4"></div>
<div class="a" style="left:681.5px;top:219.9px;width:7.5px;height:4.9px;background:linear-gradient(#fafafa,#e8e8e8);border:1px solid #a9b6c4"></div>
<div class="a" style="left:684.4px;top:218.2px;width:2px;height:1px;background:#888"></div>
<div class="a" style="left:684.4px;top:221.8px;width:2px;height:1px;background:#888"></div>
<div class="a" style="left:557.9px;top:227.7px;width:6px;height:6px;border:1px solid #8ea4bc;background:linear-gradient(#f6f9fc,#d8e2ec);border-radius:1px"></div>
<div class="t" style="left:565.1999999999999px;top:226.6px;">Bidirectional path</div>
<div class="a" style="left:557.9px;top:237.8px;width:6px;height:6px;border:1px solid #c4c4c4;background:#eeeeee;border-radius:1px"></div>
<div class="t" style="left:565.1999999999999px;top:236.7px;color:#b4b4b4">Align with path</div>
<div class="a" style="left:557.9px;top:247.6px;width:6px;height:6px;border:1px solid #8ea4bc;background:linear-gradient(#f6f9fc,#d8e2ec);border-radius:1px"></div>
<div class="t" style="left:565.1999999999999px;top:246.5px;">Fixed path</div>
<div class="btn rb" style="left:556px;top:256.7px;width:49.0px;height:10.4px;line-height:9.8px">Save to file</div>
<div class="a" style="left:551px;top:274.5px;width:154px;height:1px;background:#a9bccf"></div>
<div class="btn rb" style="left:556px;top:282px;width:72.0px;height:11.0px;line-height:10.4px">Mirror horizontally</div>
<div class="btn rb" style="left:556px;top:295.3px;width:78.6px;height:11.0px;line-height:10.4px">Mirror vertically</div>
<div class="a" style="left:551px;top:394.3px;width:155px;height:7px;background:#f0f0f0;border-top:1px solid #d8d8d8"></div>
<div class="a" style="left:557.5px;top:394.8px;width:139.5px;height:6.5px;background:linear-gradient(#c9dcf0,#eef4fb 50%,#c9dcf0);border:1px solid #9fb6d2;border-radius:1px"></div>
<div class="a" style="left:551px;top:394.3px;width:6px;height:7px;font-size:5px;line-height:7px;text-align:center;color:#222"><svg width="6" height="7" viewBox="0 0 6 7" style="display:block"><path d="M4.2,1.5 L1.6,3.5 L4.2,5.5Z" fill="#222"/></svg></div>
<div class="a" style="left:698.5px;top:394.3px;width:6px;height:7px;border-left:1px solid #c8c8c8;font-size:5px;line-height:7px;text-align:center;color:#222"><svg width="6" height="7" viewBox="0 0 6 7" style="display:block"><path d="M1.8,1.5 L4.4,3.5 L1.8,5.5Z" fill="#222"/></svg></div>
</body></html>
